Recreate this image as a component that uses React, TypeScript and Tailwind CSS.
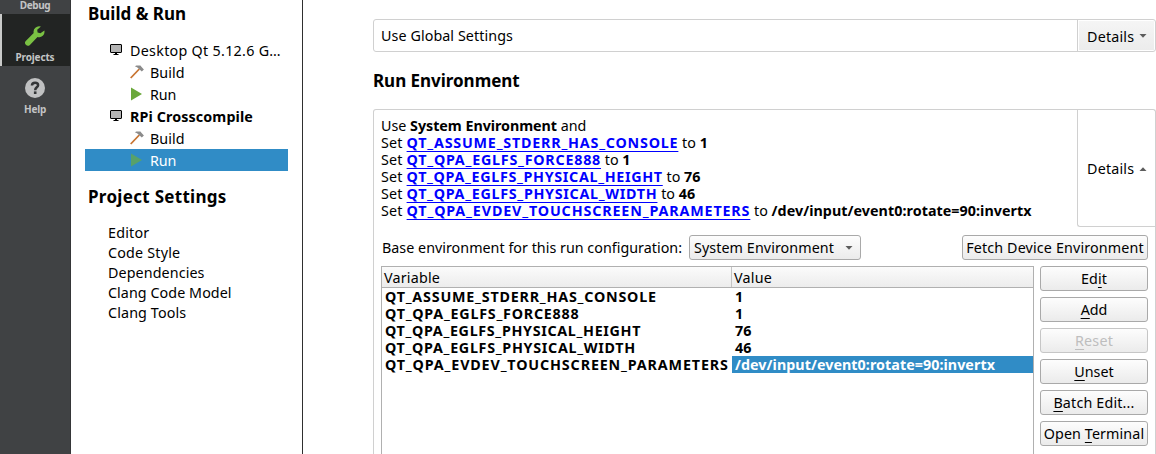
import type { ReactNode } from "react";

type EnvVar = {
  name: string;
  value: string;
  tracking: string;
};

const variables: EnvVar[] = [
  { name: "QT_ASSUME_STDERR_HAS_CONSOLE", value: "1", tracking: "tracking-[0.79px]" },
  { name: "QT_QPA_EGLFS_FORCE888", value: "1", tracking: "tracking-[0.76px]" },
  { name: "QT_QPA_EGLFS_PHYSICAL_HEIGHT", value: "76", tracking: "tracking-[0.67px]" },
  { name: "QT_QPA_EGLFS_PHYSICAL_WIDTH", value: "46", tracking: "tracking-[0.7px]" },
  {
    name: "QT_QPA_EVDEV_TOUCHSCREEN_PARAMETERS",
    value: "/dev/input/event0:rotate=90:invertx",
    tracking: "tracking-[0.86px]",
  },
];

function MonitorIcon() {
  return (
    <svg className="h-3 w-3 shrink-0" viewBox="0 0 12 12">
      <rect x="0.5" y="0.5" width="11" height="8" rx="0.5" fill="#b3b3b3" stroke="#000" />
      <path d="M5 9h2v1h1.5v1h-5v-1H5z" fill="#000" />
    </svg>
  );
}

function HammerIcon() {
  return (
    <svg className="h-[14px] w-[14px] shrink-0" viewBox="0 0 14 14">
      <path d="M0.7 13 L9.3 4" stroke="#c87431" strokeWidth="1.8" fill="none" />
      <path d="M4.8 1.3 L6.4 0.4 H10.4 L11.6 2 L13.9 4.5 L11.8 6.6 L8.5 3.4 L7 2.2 Z" fill="#8b8b8b" />
    </svg>
  );
}

function PlayIcon({ selected }: { selected?: boolean }) {
  return (
    <svg className="h-[14px] w-[14px] shrink-0" viewBox="0 0 14 14">
      <path d="M1 0.5 L12 7 L1 13.5 Z" fill={selected ? "#58a16a" : "#6aa83a"} />
    </svg>
  );
}

function WrenchIcon() {
  return (
    <svg className="h-5 w-5" viewBox="0 0 20 20">
      <path
        d="M15.9 0.5 A5.6 5.6 0 0 0 8.7 7.1 L1 14.7 A2.6 2.6 0 0 0 4.9 18.9 L12.5 11.1 A5.6 5.6 0 0 0 19.4 4.6 L15.4 7.3 L12.6 6.6 L12.2 3.8 Z"
        fill="#7ac143"
      />
    </svg>
  );
}

function HelpIcon() {
  return (
    <svg className="h-5 w-5" viewBox="0 0 20 20">
      <circle cx="10" cy="10" r="10" fill="#c0c1c2" />
      <path
        d="M6.9 7.5 C7 5.6 8.3 4.7 10.1 4.7 C11.9 4.7 13.1 5.7 13.1 7.2 C13.1 9.3 10.2 9.4 10.2 12.2"
        fill="none"
        stroke="#333537"
        strokeWidth="2.5"
      />
      <rect x="8.9" y="13.4" width="2.6" height="2.6" fill="#333537" />
    </svg>
  );
}

function Arrow({ up }: { up?: boolean }) {
  return (
    <svg className="h-1 w-2 shrink-0" viewBox="0 0 8 4">
      <path d={up ? "M0.5 4 L4 0.2 L7.5 4 Z" : "M0.5 0 L7.5 0 L4 3.8 Z"} fill="#5c5c5c" />
    </svg>
  );
}

function Heading({ children, className }: { children: ReactNode; className: string }) {
  return <h2 className={`text-[17px] leading-6 font-bold ${className}`}>{children}</h2>;
}

function PushButton({
  children,
  className = "",
  disabled,
}: {
  children: ReactNode;
  className?: string;
  disabled?: boolean;
}) {
  return (
    <button
      disabled={disabled}
      className={`flex h-[25px] shrink-0 items-center justify-center rounded-[3px] border bg-linear-to-b from-[#fdfdfd] to-[#ebebeb] whitespace-nowrap ${
        disabled ? "border-[#c6c6c6] text-[#bebebe]" : "border-[#a9a9a9]"
      } ${className}`}
    >
      <span className="leading-[21px]">{children}</span>
    </button>
  );
}

function Mnemonic({ children }: { children: string }) {
  return (
    <span className="underline decoration-1 underline-offset-[3px] [text-decoration-skip-ink:none]">
      {children}
    </span>
  );
}

function ModeBar() {
  return (
    <nav className="flex w-[71px] shrink-0 flex-col border-r border-[#353638] bg-[#404244] text-[10px] leading-3 font-bold text-[#c3c4c5]">
      <div className="h-[14px] text-center leading-[10px] tracking-[-0.35px]">Debug</div>
      <div className="flex h-[52px] flex-col items-center border-l-2 border-[#c9cac9] bg-[#222423] pt-3 pr-0.5">
        <WrenchIcon />
        <span className="mt-[5px] tracking-[-0.15px]">Projects</span>
      </div>
      <div className="flex h-[52px] flex-col items-center pt-3">
        <HelpIcon />
        <span className="mt-[5px] tracking-[-0.2px]">Help</span>
      </div>
    </nav>
  );
}

function TreeRow({ icon, label, className }: { icon: ReactNode; label: string; className: string }) {
  return (
    <div className={`flex h-[22px] items-center ${className}`}>
      {icon}
      <span className="pt-0.5 leading-[22px]">{label}</span>
    </div>
  );
}

function ProjectTree() {
  return (
    <aside className="flex w-[232px] shrink-0 flex-col border-r border-[#2f2f2f] pt-0.5">
      <Heading className="pl-[17px]">Build &amp; Run</Heading>
      <div className="mx-[14px] mt-[13px] flex flex-col">
        <TreeRow icon={<MonitorIcon />} label="Desktop Qt 5.12.6 G…" className="gap-2 pl-[25px] tracking-[0.29px]" />
        <TreeRow icon={<HammerIcon />} label="Build" className="gap-1.5 pl-[45px] tracking-[0.04px]" />
        <TreeRow icon={<PlayIcon />} label="Run" className="gap-1.5 pl-[45px] tracking-[-0.1px]" />
        <TreeRow icon={<MonitorIcon />} label="RPi Crosscompile" className="gap-2 pl-[25px] font-bold tracking-[0.11px]" />
        <TreeRow icon={<HammerIcon />} label="Build" className="gap-1.5 pl-[45px] tracking-[0.04px]" />
        <TreeRow
          icon={<PlayIcon selected />}
          label="Run"
          className="gap-1.5 bg-[#308cc6] pl-[45px] tracking-[-0.1px] text-white"
        />
      </div>
      <Heading className="mt-[14px] pl-[17px] tracking-[0.3px]">Project Settings</Heading>
      <ul className="mt-[14px] pl-[37px] leading-5">
        <li className="tracking-[0.2px]">Editor</li>
        <li className="tracking-[0.2px]">Code Style</li>
        <li className="tracking-[0.1px]">Dependencies</li>
        <li className="tracking-[0.07px]">Clang Code Model</li>
        <li className="tracking-[0.13px]">Clang Tools</li>
      </ul>
    </aside>
  );
}

function Summary() {
  return (
    <div className="flex-1 pt-[7px] pl-[7px] leading-[17px] whitespace-nowrap">
      <p>
        Use <b className="tracking-[-0.04px]">System Environment</b> and
      </p>
      {variables.map((v) => (
        <p key={v.name}>
          <span className="tracking-[0.2px]">Set </span>
          <a
            className={`font-bold text-[#0000ff] underline decoration-1 underline-offset-[3px] [text-decoration-skip-ink:none] ${v.tracking}`}
          >
            {v.name}
          </a>{" "}
          to <b className="tracking-[0.05px]">{v.value}</b>
        </p>
      ))}
    </div>
  );
}

function VariableTable() {
  return (
    <div className="flex w-[653px] flex-col border border-b-0 border-[#b0b0b0]">
      <div className="flex h-[21px] border-b border-[#b0b0b0] bg-linear-to-b from-[#fbfbfb] to-[#ececec] leading-[21px]">
        <div className="w-[350px] border-r border-[#c4c4c4] pl-0.5 tracking-[0.2px]">Variable</div>
        <div className="pl-0.5 tracking-[0.22px]">Value</div>
      </div>
      {variables.map((v, i) => (
        <div key={v.name} className="flex h-[17px] leading-[17px] font-bold whitespace-nowrap">
          <div className={`w-[350px] pl-[3px] ${v.tracking}`}>{v.name}</div>
          <div
            className={`flex-1 pl-[3px] tracking-[0.05px] ${
              i === variables.length - 1 ? "bg-[#308cc6] text-white" : ""
            }`}
          >
            {v.value}
          </div>
        </div>
      ))}
    </div>
  );
}

function RunSettings() {
  return (
    <main className="flex flex-1 flex-col pt-[19px] pl-[70px]">
      <section className="flex h-[33px] shrink-0 rounded-[3px] border border-[#d0d0d0]">
        <div className="flex-1 pl-[7px] leading-[31px] tracking-[0.08px]">Use Global Settings</div>
        <div className="flex w-[78px] border-l border-[#d0d0d0] p-px">
          <div className="flex flex-1 items-center gap-[5px] bg-linear-to-b from-[#f5f5f5] to-[#ececec] pl-2">
            <span className="pt-0.5 leading-[27px] tracking-[0.2px]">Details</span>
            <Arrow />
          </div>
        </div>
      </section>

      <Heading className="mt-[17px] tracking-[-0.03px]">Run Environment</Heading>

      <section className="mt-4 flex flex-1 flex-col rounded-t-[3px] border border-b-0 border-[#d0d0d0]">
        <div className="flex h-[117px] shrink-0">
          <Summary />
          <div className="flex w-[78px] items-center gap-[5px] rounded-bl-[3px] border-b border-l border-[#d0d0d0] pt-0.5 pl-[9px]">
            <span className="pb-0.5 leading-[21px] tracking-[0.2px]">Details</span>
            <Arrow up />
          </div>
        </div>

        <div className="mt-2 flex h-[25px] shrink-0 items-center pr-[7px] pl-2">
          <span className="w-[307px] leading-[25px] whitespace-nowrap tracking-[0.02px]">
            Base environment for this run configuration:
          </span>
          <button className="flex h-[25px] w-[172px] items-center justify-between rounded-[3px] border border-[#a9a9a9] bg-linear-to-b from-[#fdfdfd] to-[#ebebeb] pr-[7px] pl-1">
            <span className="leading-[23px] tracking-[0.08px]">System Environment</span>
            <Arrow />
          </button>
          <PushButton className="ml-auto w-[186px] tracking-[0.15px]">Fetch Device Environment</PushButton>
        </div>

        <div className="mt-1.5 flex flex-1 gap-1.5 pl-[7px]">
          <VariableTable />
          <div className="flex w-[108px] flex-col gap-1.5">
            <PushButton className="tracking-[0.1px]">
              Ed<Mnemonic>i</Mnemonic>t
            </PushButton>
            <PushButton>
              <Mnemonic>A</Mnemonic>dd
            </PushButton>
            <PushButton disabled className="tracking-[0.2px]">
              <Mnemonic>R</Mnemonic>eset
            </PushButton>
            <PushButton>
              <Mnemonic>U</Mnemonic>nset
            </PushButton>
            <PushButton className="tracking-[0.17px]">
              <Mnemonic>B</Mnemonic>atch Edit...
            </PushButton>
            <PushButton className="tracking-[0.1px]">
              Open <Mnemonic>T</Mnemonic>erminal
            </PushButton>
          </div>
        </div>
      </section>
    </main>
  );
}

export default function App() {
  return (
    <div className="flex h-[454px] w-[1156px] overflow-hidden bg-white font-['Noto_Sans',sans-serif] text-[14.3px] text-black">
      <ModeBar />
      <ProjectTree />
      <RunSettings />
    </div>
  );
}
